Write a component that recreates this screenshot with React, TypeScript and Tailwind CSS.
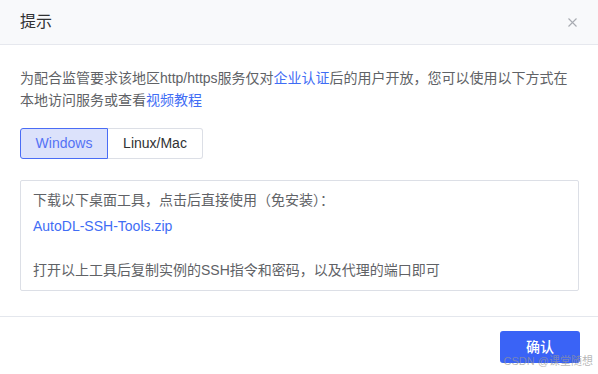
export default function App() {
  const font = { fontFamily: '"Liberation Sans", "Noto Sans CJK SC", sans-serif' };

  return (
    <div
      className="relative w-[598px] h-[374px] bg-white flex flex-col overflow-hidden"
      style={font}
    >
      {/* header */}
      <div className="h-[45px] shrink-0 flex items-center justify-between pl-5 pr-[21px] bg-[#f8f9fb] border-b border-[#e6e8ee]">
        <span className="text-[16px] leading-[22px] text-[#303133]">提示</span>
        <svg width="9" height="9" viewBox="0 0 9 9" className="mt-[1px]">
          <path d="M0.5 0.5 L8.5 8.5 M8.5 0.5 L0.5 8.5" stroke="#a8abb2" strokeWidth="1.1" />
        </svg>
      </div>

      {/* body */}
      <div className="flex flex-col px-5 pt-[22px] pb-[25px] border-b border-[#e4e7ed]">
        <p className="text-[14px] leading-[22px] text-[#606266] w-[558px]">
          为配合监管要求该地区http/https服务仅对
          <span className="text-[#3f6df5]">企业认证</span>
          后的用户开放，您可以使用以下方式在本地访问服务或查看
          <span className="text-[#3f6df5]">视频教程</span>
        </p>

        <div className="flex mt-[17px]">
          <button className="w-[88px] h-[31px] text-[14px] text-[#5472f5] bg-[#dce2fb] border border-[#4a6cf5] rounded-l-[3px]">
            Windows
          </button>
          <button className="w-[95px] h-[31px] text-[14px] text-[#303133] bg-white border border-l-0 border-[#dcdfe6] rounded-r-[3px]">
            Linux/Mac
          </button>
        </div>

        <div className="mt-[21px] w-[559px] border border-[#dcdfe6] rounded-[2px] px-3 pt-[8px] pb-[9px] text-[14px] leading-[22px] text-[#606266]">
          <div>下载以下桌面工具，点击后直接使用（免安装）：</div>
          <div className="mt-1 text-[#3f6df5]">AutoDL-SSH-Tools.zip</div>
          <div className="h-[22px]" />
          <div>打开以上工具后复制实例的SSH指令和密码，以及代理的端口即可</div>
        </div>
      </div>

      {/* footer */}
      <div className="flex justify-end pr-[18px] pt-[14px]">
        <button className="w-[80px] h-[32px] rounded-[3px] bg-[#3a63f6] text-white text-[14px] font-medium">
          确认
        </button>
      </div>

      <span className="absolute right-[5px] bottom-[6px] text-[11px] leading-[13px] text-[rgba(150,150,150,0.7)]">
        CSDN @课堂随想
      </span>
    </div>
  );
}
